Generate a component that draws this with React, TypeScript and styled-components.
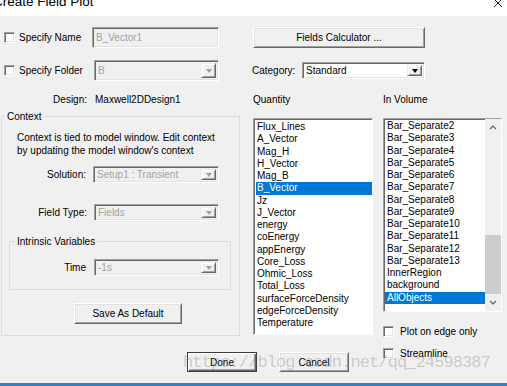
import React from "react";
import styled, { createGlobalStyle } from "styled-components";

const GlobalStyle = createGlobalStyle`
  html, body {
    margin: 0;
    padding: 0;
    background: #f0f0f0;
  }
  body {
    font-family: "Liberation Sans", Arial, sans-serif;
    font-size: 10px;
    color: #000;
  }
  * {
    box-sizing: border-box;
  }
`;

const Window = styled.div`
  width: 507px;
  height: 386px;
  overflow: hidden;
  display: flex;
  flex-direction: column;
  background: #f0f0f0;
`;

const TitleBar = styled.div`
  height: 16px;
  flex: none;
  background: #ffffff;
  display: flex;
  justify-content: space-between;
  align-items: flex-start;
  overflow: hidden;
`;

const Title = styled.span`
  font-size: 13.5px;
  line-height: 14px;
  margin: -5px 0 0 -7px;
  white-space: nowrap;
`;

const CloseIcon = styled.svg`
  margin: -2px 4px 0 0;
  flex: none;
`;

const Body = styled.div`
  flex: 1;
  position: relative;
  padding-top: 11px;
  display: flex;
  flex-direction: column;
  overflow: hidden;
`;

const Row = styled.div<{ $h: number; $mt?: number }>`
  display: flex;
  align-items: center;
  height: ${(p) => p.$h}px;
  margin-top: ${(p) => p.$mt ?? 0}px;
  flex: none;
`;

const Spacer = styled.div<{ $w: number }>`
  width: ${(p) => p.$w}px;
  flex: none;
`;

const CheckLabel = styled.div<{ $w: number }>`
  width: ${(p) => p.$w}px;
  flex: none;
  display: flex;
  align-items: center;
  gap: 4px;
  padding-left: 4px;
  white-space: nowrap;
`;

const CheckBox = styled.span`
  width: 11px;
  height: 11px;
  flex: none;
  background: #ffffff;
  border: 1px solid;
  border-color: #a0a0a0 #ffffff #ffffff #a0a0a0;
  box-shadow: inset 1px 1px 0 #696969, inset -1px -1px 0 #e3e3e3;
`;

const Text = styled.span<{ $w?: number; $right?: boolean; $ml?: number }>`
  ${(p) => (p.$w ? `width: ${p.$w}px; flex: none;` : "")}
  margin-left: ${(p) => p.$ml ?? 0}px;
  text-align: ${(p) => (p.$right ? "right" : "left")};
  white-space: nowrap;
`;

const Sunken = styled.div<{ $w: number; $h: number; $ml?: number; $disabled?: boolean }>`
  width: ${(p) => p.$w}px;
  height: ${(p) => p.$h}px;
  margin-left: ${(p) => p.$ml ?? 0}px;
  flex: none;
  display: flex;
  align-items: stretch;
  padding: 2px;
  background: ${(p) => (p.$disabled ? "#f0f0f0" : "#ffffff")};
  color: ${(p) => (p.$disabled ? "#a3a3a3" : "#000000")};
  border: 1px solid;
  border-color: #a0a0a0 #ffffff #ffffff #a0a0a0;
  box-shadow: inset 1px 1px 0 #696969, inset -1px -1px 0 #e3e3e3;
  white-space: nowrap;
`;

const FieldText = styled.span`
  flex: 1;
  display: flex;
  align-items: center;
  padding-left: 1px;
  overflow: hidden;
`;

const ComboArrow = styled.div<{ $disabled?: boolean }>`
  width: 15px;
  flex: none;
  display: flex;
  align-items: center;
  justify-content: center;
  background: #f0f0f0;
  border: 1px solid;
  border-color: #f0f0f0 #696969 #696969 #f0f0f0;
  box-shadow: inset 1px 1px 0 #ffffff, inset -1px -1px 0 #a0a0a0;

  &::after {
    content: "";
    border-left: 3.5px solid transparent;
    border-right: 3.5px solid transparent;
    border-top: 4px solid ${(p) => (p.$disabled ? "#a0a0a0" : "#000000")};
  }
`;

const PushButton = styled.div<{ $w: number; $h: number; $ml?: number; $mt?: number; $default?: boolean }>`
  width: ${(p) => p.$w}px;
  height: ${(p) => p.$h}px;
  margin-left: ${(p) => p.$ml ?? 0}px;
  margin-top: ${(p) => p.$mt ?? 0}px;
  flex: none;
  display: flex;
  align-items: center;
  justify-content: center;
  background: #f0f0f0;
  border: 1px solid;
  border-color: ${(p) => (p.$default ? "#3c3c3c" : "#ffffff #696969 #696969 #ffffff")};
  box-shadow: ${(p) =>
    p.$default
      ? "inset 1px 1px 0 #ffffff, inset -1px -1px 0 #696969, inset -2px -2px 0 #a0a0a0"
      : "inset 1px 1px 0 #e3e3e3, inset -1px -1px 0 #a0a0a0"};
  white-space: nowrap;
`;

const Lower = styled.div`
  display: grid;
  grid-template-columns: 253px 130px 124px;
  grid-template-rows: 220px auto;
  margin-top: 10px;
`;

const Column = styled.div<{ $rows?: string }>`
  display: flex;
  flex-direction: column;
  align-items: flex-start;
  grid-row: ${(p) => p.$rows ?? "1"};
`;

const GroupBox = styled.div<{ $w: number; $h: number; $ml: number; $mt?: number }>`
  width: ${(p) => p.$w}px;
  height: ${(p) => p.$h}px;
  margin-left: ${(p) => p.$ml}px;
  margin-top: ${(p) => p.$mt ?? 0}px;
  flex: none;
  border: 1px solid #dcdcdc;
  display: flex;
  flex-direction: column;
  align-items: flex-start;
`;

const GroupTitle = styled.span<{ $ml: number }>`
  margin: -7px 0 0 ${(p) => p.$ml}px;
  padding: 0 2px;
  background: #f0f0f0;
  line-height: 13px;
  white-space: nowrap;
`;

const Note = styled.p`
  margin: 8px 0 0 15px;
  line-height: 13px;
  white-space: nowrap;
`;

const ListBox = styled.div<{ $w: number; $h: number }>`
  width: ${(p) => p.$w}px;
  height: ${(p) => p.$h}px;
  margin-top: 2px;
  flex: none;
  display: flex;
  background: #ffffff;
  border: 1px solid;
  border-color: #a0a0a0 #ffffff #ffffff #a0a0a0;
  box-shadow: inset 1px 1px 0 #696969;
  overflow: hidden;
`;

const Items = styled.div<{ $pt: number; $ml: number }>`
  flex: 1;
  padding-top: ${(p) => p.$pt}px;
  padding-left: ${(p) => p.$ml}px;
  display: flex;
  flex-direction: column;
`;

const ListItem = styled.div<{ $selected?: boolean; $pl: number }>`
  height: 12.25px;
  line-height: 12.25px;
  padding-left: ${(p) => p.$pl}px;
  white-space: nowrap;
  background: ${(p) => (p.$selected ? "#0078d7" : "transparent")};
  color: ${(p) => (p.$selected ? "#ffffff" : "#000000")};
`;

const ScrollBar = styled.div`
  width: 16px;
  flex: none;
  display: flex;
  flex-direction: column;
  background: #f0f0f0;
`;

const ScrollButton = styled.div`
  height: 17px;
  flex: none;
  display: flex;
  align-items: center;
  justify-content: center;
`;

const Track = styled.div`
  flex: 1;
  display: flex;
  flex-direction: column;
`;

const Thumb = styled.div<{ $top: number; $h: number }>`
  margin-top: ${(p) => p.$top}px;
  height: ${(p) => p.$h}px;
  background: #cdcdcd;
`;

const Option = styled.div<{ $mt: number }>`
  display: flex;
  align-items: center;
  gap: 6px;
  height: 11px;
  margin-top: ${(p) => p.$mt}px;
  white-space: nowrap;
`;

const Actions = styled.div`
  grid-column: 1 / 3;
  grid-row: 2;
  display: flex;
  padding-top: 16px;
`;

const Watermark = styled.div`
  position: absolute;
  left: 183px;
  top: 337px;
  font-family: "Liberation Mono", "Courier New", monospace;
  font-size: 17px;
  line-height: 20px;
  letter-spacing: -0.9px;
  color: rgba(120, 120, 120, 0.32);
  white-space: nowrap;
  pointer-events: none;
`;

const TaskStrip = styled.div`
  height: 3px;
  flex: none;
  background: #3c7fc1;
`;

const quantities = [
  "Flux_Lines",
  "A_Vector",
  "Mag_H",
  "H_Vector",
  "Mag_B",
  "B_Vector",
  "Jz",
  "J_Vector",
  "energy",
  "coEnergy",
  "appEnergy",
  "Core_Loss",
  "Ohmic_Loss",
  "Total_Loss",
  "surfaceForceDensity",
  "edgeForceDensity",
  "Temperature",
];

const volumes = [
  "Bar_Separate2",
  "Bar_Separate3",
  "Bar_Separate4",
  "Bar_Separate5",
  "Bar_Separate6",
  "Bar_Separate7",
  "Bar_Separate8",
  "Bar_Separate9",
  "Bar_Separate10",
  "Bar_Separate11",
  "Bar_Separate12",
  "Bar_Separate13",
  "InnerRegion",
  "background",
  "AllObjects",
];

function Chevron({ up }: { up?: boolean }) {
  return (
    <svg width="8" height="5" viewBox="0 0 8 5">
      <polyline
        points={up ? "1,4 4,1 7,4" : "1,1 4,4 7,1"}
        fill="none"
        stroke="#606060"
        strokeWidth="1.2"
      />
    </svg>
  );
}

function Combo({ w, h, ml, text, disabled }: { w: number; h: number; ml?: number; text: string; disabled?: boolean }) {
  return (
    <Sunken $w={w} $h={h} $ml={ml} $disabled={disabled}>
      <FieldText>{text}</FieldText>
      <ComboArrow $disabled={disabled} />
    </Sunken>
  );
}

export default function App() {
  return (
    <>
      <GlobalStyle />
      <Window>
        <TitleBar>
          <Title>Create Field Plot</Title>
          <CloseIcon width="10" height="10" viewBox="0 0 10 10">
            <path d="M1 1 L9 9 M9 1 L1 9" stroke="#222" strokeWidth="1" />
          </CloseIcon>
        </TitleBar>
        <Body>
          <Row $h={21}>
            <CheckLabel $w={92}>
              <CheckBox />
              <span>Specify Name</span>
            </CheckLabel>
            <Sunken $w={127} $h={21} $disabled>
              <FieldText>B_Vector1</FieldText>
            </Sunken>
            <Spacer $w={34} />
            <PushButton $w={172} $h={21}>
              Fields Calculator ...
            </PushButton>
          </Row>

          <Row $h={21} $mt={12}>
            <CheckLabel $w={94}>
              <CheckBox />
              <span>Specify Folder</span>
            </CheckLabel>
            <Combo w={125} h={21} text="B" disabled />
            <Spacer $w={33} />
            <Text $w={50}>Category:</Text>
            <Combo w={123} h={17} text="Standard" />
          </Row>

          <Row $h={14} $mt={11}>
            <Text $w={87} $right>
              Design:
            </Text>
            <Text $w={158} $ml={8}>
              Maxwell2DDesign1
            </Text>
            <Text $w={130}>Quantity</Text>
            <Text>In Volume</Text>
          </Row>

          <Lower>
            <Column>
              <GroupBox $w={239} $h={220} $ml={1}>
                <GroupTitle $ml={3}>Context</GroupTitle>
                <Note>
                  Context is tied to model window. Edit context
                  <br />
                  by updating the model window's context
                </Note>
                <Row $h={17} $mt={9}>
                  <Text $w={84} $right>
                    Solution:
                  </Text>
                  <Combo w={126} h={17} ml={7} text="Setup1 : Transient" disabled />
                </Row>
                <Row $h={17} $mt={21}>
                  <Text $w={85} $right>
                    Field Type:
                  </Text>
                  <Combo w={125} h={17} ml={7} text="Fields" disabled />
                </Row>
                <GroupBox $w={222} $h={49} $ml={7} $mt={20}>
                  <GroupTitle $ml={5}>Intrinsic Variables</GroupTitle>
                  <Row $h={17} $mt={11}>
                    <Text $w={76} $right>
                      Time
                    </Text>
                    <Combo w={125} h={17} ml={8} text="-1s" disabled />
                  </Row>
                </GroupBox>
                <PushButton $w={108} $h={21} $ml={72} $mt={13}>
                  Save As Default
                </PushButton>
              </GroupBox>
            </Column>

            <Column>
              <ListBox $w={120} $h={217}>
                <Items $pt={2} $ml={2}>
                  {quantities.map((q) => (
                    <ListItem key={q} $pl={1} $selected={q === "B_Vector"}>
                      {q}
                    </ListItem>
                  ))}
                </Items>
              </ListBox>
            </Column>

            <Column $rows="1 / 3">
              <ListBox $w={119} $h={194}>
                <Items $pt={1} $ml={1}>
                  {volumes.map((v) => (
                    <ListItem key={v} $pl={2} $selected={v === "AllObjects"}>
                      {v}
                    </ListItem>
                  ))}
                </Items>
                <ScrollBar>
                  <ScrollButton>
                    <Chevron up />
                  </ScrollButton>
                  <Track>
                    <Thumb $top={99} $h={59} />
                  </Track>
                  <ScrollButton>
                    <Chevron />
                  </ScrollButton>
                </ScrollBar>
              </ListBox>
              <Option $mt={14}>
                <CheckBox />
                <span>Plot on edge only</span>
              </Option>
              <Option $mt={11}>
                <CheckBox />
                <span>Streamline</span>
              </Option>
            </Column>

            <Actions>
              <PushButton $w={70} $h={20} $ml={187} $default>
                Done
              </PushButton>
              <PushButton $w={70} $h={20} $ml={22}>
                Cancel
              </PushButton>
            </Actions>
          </Lower>

          <Watermark>https://blog.csdn.net/qq_24598387</Watermark>
        </Body>
        <TaskStrip />
      </Window>
    </>
  );
}
